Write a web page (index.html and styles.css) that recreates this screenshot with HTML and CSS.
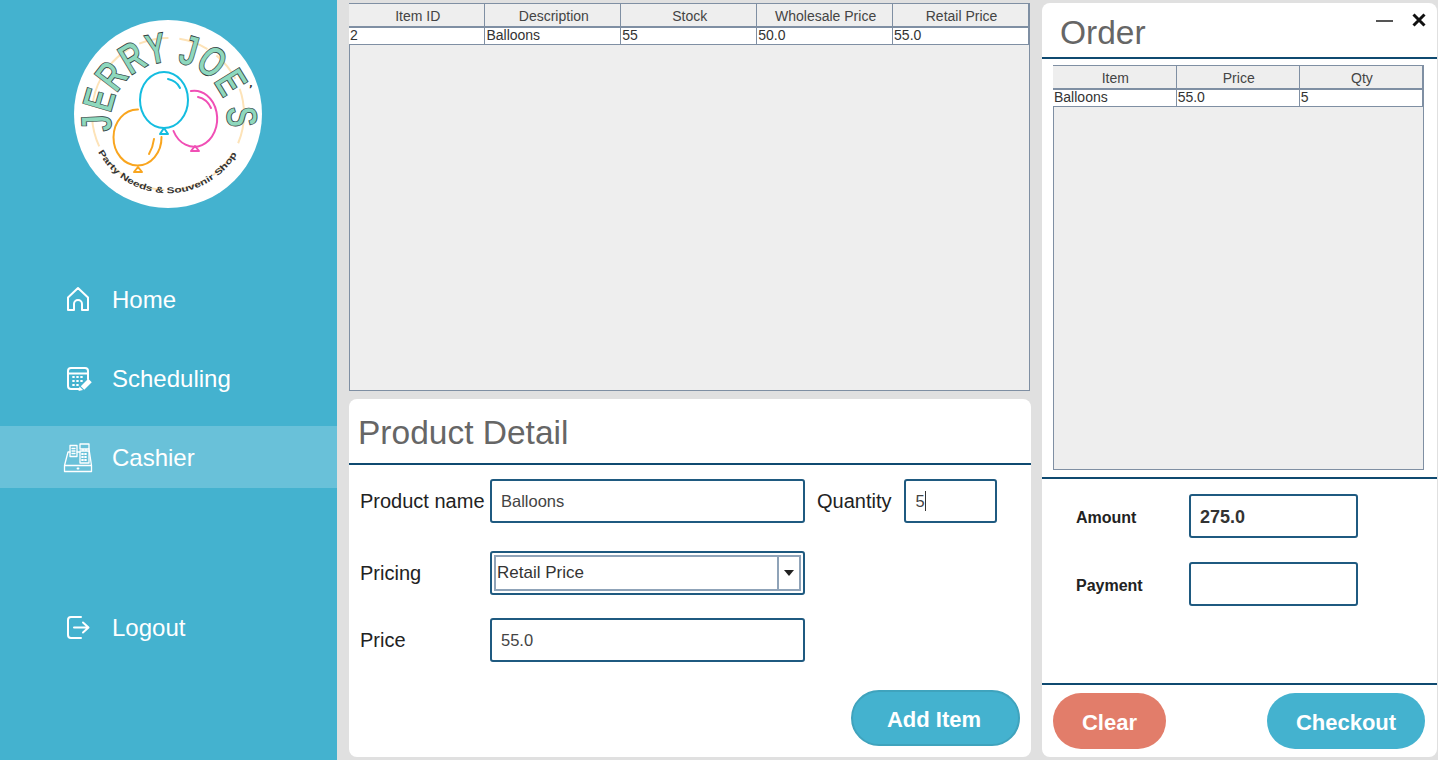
FILE: index.html
```html
<!DOCTYPE html>
<html lang="en">
<head>
<meta charset="UTF-8">
<meta name="viewport" content="width=device-width, initial-scale=1.0">
<title>Jerry Joe's - Cashier</title>
<link rel="stylesheet" href="styles.css">
</head>
<body>
<div class="app">
  <aside class="side">
    <svg class="logo" viewBox="74 20 188 188" aria-label="Jerry Joe's logo">
      <defs>
        <path id="arcTop" d="M112 131 A58 58 0 1 1 226 131"/>
        <path id="arcBottom" d="M98 152 A80 80 0 0 0 238 152"/>
      </defs>
      <circle cx="168" cy="114" r="94" fill="#fff"/>
      <circle class="ring" cx="168" cy="114" r="76"/>
      <g class="balloon orange">
        <path d="M138 109.5A24 28 0 1 0 161.5 137"/>
        <path d="M154 139Q153 147 149 154"/>
        <path class="knot" d="M138 167l-4 5h8z"/>
      </g>
      <g class="balloon pink">
        <path d="M191 91A23 28 0 1 1 173.5 131"/>
        <path d="M198 97Q207 99 211 108"/>
        <path class="knot" d="M195 146l-4 5h8z"/>
      </g>
      <g class="balloon cyan">
        <ellipse cx="164" cy="100" rx="24" ry="28"/>
        <path d="M168 79Q177 81 180 88"/>
        <path class="knot" d="M164 128l-4 6h8z"/>
      </g>
      <text class="logo-name"><textPath href="#arcTop" textLength="200" lengthAdjust="spacingAndGlyphs">JERRY JOE S</textPath></text>
      <text class="logo-tick" x="249" y="93">’</text>
      <text class="logo-sub"><textPath href="#arcBottom" textLength="168" lengthAdjust="spacingAndGlyphs">Party Needs &amp; Souvenir Shop</textPath></text>
    </svg>

    <nav class="nav">
      <a class="nav-item">
        <svg class="ico" viewBox="0 0 30 30"><path d="M5 25V12.5L15 3l10 9.5V25h-6v-6a4 4 0 0 0-8 0v6z"/></svg>
        <span>Home</span>
      </a>
      <a class="nav-item">
        <svg class="ico" viewBox="0 0 30 30">
          <path d="M16 25H8a3 3 0 0 1-3-3V7a3 3 0 0 1 3-3h14a3 3 0 0 1 3 3v8M5 9.500h20"/>
          <path class="dots" d="M10 13h1M14 13h1M18 13h1M10 17h1M14 17h1M18 17h1M10 21h1M14 21h1"/>
          <path class="pencil" d="M27 16.500L19.500 24"/>
          <path class="solid" d="M15.500 27l1-4.500 3.500 3.500z"/>
        </svg>
        <span>Scheduling</span>
      </a>
      <a class="nav-item active">
        <svg class="ico" viewBox="0 0 30 30">
          <path d="M1.500 22.500h27v6h-27zM1.500 22.500L5 9h2M28.500 22.500L26 6M14 9h3"/>
          <path d="M7 2.500h7v11H7zM9 5.500h3M9 8h3M9 10.500h3"/>
          <path d="M17 1h9v5h-9zM20 6v2h3V6M17 8h9v12h-9z"/>
          <path class="dots" d="M19 11h1M22 11h1M19 14h1M22 14h1M19 17h1M22 17h1M14.500 25.500h1"/>
        </svg>
        <span>Cashier</span>
      </a>
      <a class="nav-item logout">
        <svg class="ico" viewBox="0 0 30 30"><path d="M18 4H8a3 3 0 0 0-3 3v15a3 3 0 0 0 3 3h10M11 14.500h14M20 9.500l5.500 5-5.500 5"/></svg>
        <span>Logout</span>
      </a>
    </nav>
  </aside>

  <main class="center">
    <div class="table-box products">
      <table class="grid">
        <thead>
          <tr><th>Item ID</th><th>Description</th><th>Stock</th><th>Wholesale Price</th><th>Retail Price</th></tr>
        </thead>
        <tbody>
          <tr><td>2</td><td>Balloons</td><td>55</td><td>50.0</td><td>55.0</td></tr>
        </tbody>
      </table>
    </div>

    <section class="panel detail">
      <h2 class="panel-title">Product Detail</h2>
      <div class="form">
        <div class="form-row">
          <label class="lbl">Product name</label>
          <div class="field wide">Balloons</div>
          <label class="lbl qty-lbl">Quantity</label>
          <div class="field qty">5<span class="caret"></span></div>
        </div>
        <div class="form-row pricing">
          <label class="lbl">Pricing</label>
          <div class="field wide combo">
            <div class="combo-in">
              <span class="combo-text">Retail Price</span>
              <span class="combo-btn"><i class="arrow"></i></span>
            </div>
          </div>
        </div>
        <div class="form-row price">
          <label class="lbl">Price</label>
          <div class="field wide">55.0</div>
        </div>
      </div>
      <div class="detail-actions">
        <button class="btn add">Add Item</button>
      </div>
    </section>
  </main>

  <section class="panel order">
    <div class="win-btns">
      <span class="win-min"></span>
      <svg class="win-close" viewBox="0 0 14 14"><path d="M1.500 1.500l11 11M12.500 1.500l-11 11"/></svg>
    </div>
    <h2 class="panel-title order-title">Order</h2>
    <div class="table-wrap">
      <div class="table-box cart">
        <table class="grid">
          <thead>
            <tr><th>Item</th><th>Price</th><th>Qty</th></tr>
          </thead>
          <tbody>
            <tr><td>Balloons</td><td>55.0</td><td>5</td></tr>
          </tbody>
        </table>
      </div>
    </div>
    <div class="totals">
      <div class="total-row">
        <label class="lbl-b">Amount</label>
        <div class="field total strong">275.0</div>
      </div>
      <div class="total-row">
        <label class="lbl-b">Payment</label>
        <div class="field total"></div>
      </div>
    </div>
    <div class="order-actions">
      <button class="btn clear">Clear</button>
      <button class="btn checkout">Checkout</button>
    </div>
  </section>
</div>
</body>
</html>
```

FILE: styles.css
```css
*{box-sizing:border-box;margin:0;padding:0;font-family:"Liberation Sans",Arial,sans-serif}
html,body{height:100%;overflow:hidden}
body{background:#e0e0e0}
.app{display:flex;width:1438px;height:760px}

/* sidebar */
.side{width:337px;flex:none;background:#44b2cf;padding-top:20px}
.logo{display:block;width:188px;height:188px;margin-left:74px}
.ring{fill:none;stroke:#fde3b8;stroke-width:2;stroke-dasharray:30 11}
.balloon path,.balloon ellipse{fill:none;stroke-width:2;stroke-linecap:round}
.balloon .knot{fill:#fff;stroke-linejoin:round}
.orange path{stroke:#f9a51e}
.pink path{stroke:#f04fb5}
.cyan path,.cyan ellipse{stroke:#14bde0}
.logo-name{font-family:"Liberation Serif",serif;font-size:43px;font-weight:bold;fill:#8ed8bd;stroke:#2f3a3a;stroke-width:.8}
.logo-tick{font-family:"DejaVu Sans",sans-serif;font-size:10px;font-weight:bold;fill:#333}
.logo-sub{font-family:"DejaVu Serif",serif;font-size:8.500px;font-weight:bold;fill:#333}
.nav{margin-top:61px;display:flex;flex-direction:column;gap:16.500px}
.nav-item{height:62px;display:flex;align-items:center;gap:19px;padding-left:63px;color:#fff;font-size:24px}
.nav-item.active{background:#69c1d9;padding-top:1px}
.nav-item.logout{margin-top:92px}
.ico{width:30px;height:30px;flex:none;fill:none;stroke:#fff;stroke-width:2;stroke-linejoin:round;stroke-linecap:round}
.ico .dots{stroke-width:1.8}
.ico .pencil{stroke-width:5;stroke-linecap:butt}
.ico .solid{fill:#fff;stroke:none}
.active .ico{stroke-width:1.3}

/* center */
.center{width:705px;flex:none;padding:3px 0 3px 12px;display:flex;flex-direction:column}
.table-box{background:#eee;border:1px solid #7f8fa3}
.products{width:681px;height:388px;margin-bottom:8px}
.grid{border-collapse:collapse;table-layout:fixed;width:calc(100% + 1px);margin-left:-1px;font-size:14px;color:#333}
.grid th{height:23px;background:#eee;font-weight:normal;border:1px solid #7f8fa3;border-top:0;border-bottom-width:2px;text-align:center;color:#444;padding:1px 0 0 2px}
.grid td{height:17px;background:#fff;border:1px solid #7f8fa3;padding:0 1px 1px;line-height:15px}
.grid th:first-child,.grid td:first-child{border-left:0}

.panel{background:#fff;border-radius:8px}
.panel-title{height:66px;padding:15px 0 0 9px;font-size:33.500px;font-weight:normal;line-height:38px;color:#666;border-bottom:2px solid #0f4a70}
.detail{width:682px;height:358px;display:flex;flex-direction:column}
.form{padding:14px 0 0 11px}
.form-row{display:flex;align-items:center;height:44px}
.pricing{margin-top:28px}
.price{margin-top:23px}
.lbl{width:130px;flex:none;font-size:20px;color:#222}
.field{height:44px;border:2px solid #1f5a80;border-radius:3px;background:#fff;display:flex;align-items:center;padding-left:9px;font-size:16.500px;color:#444}
.wide{width:315px}
.qty-lbl{width:auto;margin-left:12px}
.qty{width:93px;margin-left:13px}
.caret{width:1px;height:20px;background:#333}
.combo{padding:2px}
.combo-in{flex:1;height:100%;display:flex;align-items:center;border:2px solid #8fa3b8}
.combo-text{flex:1;padding-left:1px;font-size:17px;color:#333}
.combo-btn{width:22px;height:100%;border-left:2px solid #8fa3b8;display:flex;align-items:center;justify-content:center}
.arrow{width:0;height:0;border:5.500px solid transparent;border-top:6px solid #222;border-bottom:0}
.detail-actions{margin-top:28px;padding-right:11px;display:flex;justify-content:flex-end}
.btn{height:56px;border:0;border-radius:28px;padding-top:3px;color:#fff;font-size:22px;font-weight:bold;background:#44b2cf}
.add{width:169px;border:2px solid #3fa3bd;padding-right:3px}

/* order */
.order{width:395px;height:754px;margin-top:3px;position:relative;display:flex;flex-direction:column}
.order-title{height:56px;padding:11px 0 0 18px}
.win-btns{position:absolute;top:10px;right:11px;display:flex;align-items:center;gap:19px}
.win-min{width:17px;height:2px;margin-top:1px;background:#555}
.win-close{width:14px;height:14px;fill:none;stroke:#111;stroke-width:3}
.table-wrap{height:420px;padding:6px 13px 0 11px;border-bottom:2px solid #0f4a70}
.cart{width:371px;height:405px}
.totals{height:206px;padding-top:15px;border-bottom:2px solid #0f4a70;display:flex;flex-direction:column;gap:24px}
.total-row{display:flex;align-items:center;padding-left:34px}
.lbl-b{width:113px;padding-top:3px;font-size:16px;font-weight:bold;color:#222}
.total{width:169px;font-size:18px}
.strong{font-weight:bold;color:#333;padding-top:3px}
.order-actions{display:flex;justify-content:space-between;padding:8px 12px 0 11px}
.clear{width:113px;background:#e27d6a}
.checkout{width:158px}
```
